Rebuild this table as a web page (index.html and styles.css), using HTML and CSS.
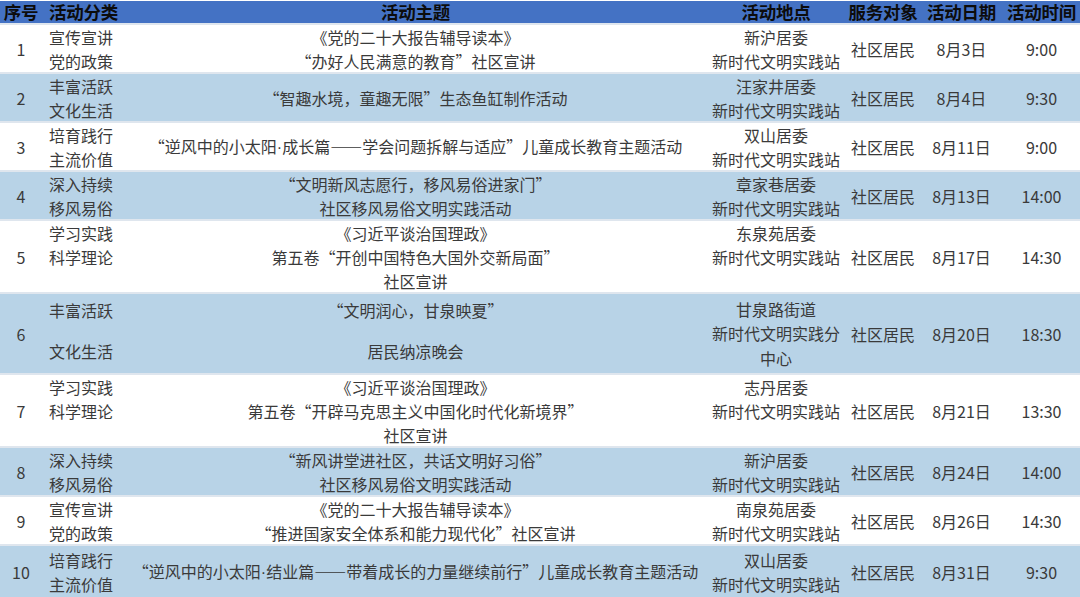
FILE: index.html
```html
<!DOCTYPE html>
<html lang="zh-CN">
<head>
<meta charset="utf-8">
<title>活动安排</title>
<link rel="stylesheet" href="styles.css">
</head>
<body>
<div class="table">
  <div class="row head">
    <div class="cell">序号</div>
    <div class="cell">活动分类</div>
    <div class="cell">活动主题</div>
    <div class="cell">活动地点</div>
    <div class="cell">服务对象</div>
    <div class="cell">活动日期</div>
    <div class="cell">活动时间</div>
  </div>

  <div class="row h2">
    <div class="cell">1</div>
    <div class="cell cat"><span>宣传宣讲</span><span>党的政策</span></div>
    <div class="cell"><span>《党的二十大报告辅导读本》</span><span>“办好人民满意的教育”社区宣讲</span></div>
    <div class="cell"><span>新沪居委</span><span>新时代文明实践站</span></div>
    <div class="cell">社区居民</div>
    <div class="cell">8月3日</div>
    <div class="cell">9:00</div>
  </div>

  <div class="row h2 alt">
    <div class="cell">2</div>
    <div class="cell cat"><span>丰富活跃</span><span>文化生活</span></div>
    <div class="cell"><span>“智趣水境，童趣无限”生态鱼缸制作活动</span></div>
    <div class="cell"><span>汪家井居委</span><span>新时代文明实践站</span></div>
    <div class="cell">社区居民</div>
    <div class="cell">8月4日</div>
    <div class="cell">9:30</div>
  </div>

  <div class="row h2">
    <div class="cell">3</div>
    <div class="cell cat"><span>培育践行</span><span>主流价值</span></div>
    <div class="cell"><span>“逆风中的小太阳<span class="dot">·</span>成长篇——学会问题拆解与适应”儿童成长教育主题活动</span></div>
    <div class="cell"><span>双山居委</span><span>新时代文明实践站</span></div>
    <div class="cell">社区居民</div>
    <div class="cell">8月11日</div>
    <div class="cell">9:00</div>
  </div>

  <div class="row h2 alt">
    <div class="cell">4</div>
    <div class="cell cat"><span>深入持续</span><span>移风易俗</span></div>
    <div class="cell"><span>“文明新风志愿行，移风易俗进家门”</span><span>社区移风易俗文明实践活动</span></div>
    <div class="cell"><span>章家巷居委</span><span>新时代文明实践站</span></div>
    <div class="cell">社区居民</div>
    <div class="cell">8月13日</div>
    <div class="cell">14:00</div>
  </div>

  <div class="row h3">
    <div class="cell">5</div>
    <div class="cell cat top"><span>学习实践</span><span>科学理论</span></div>
    <div class="cell"><span>《习近平谈治国理政》</span><span>第五卷“开创中国特色大国外交新局面”</span><span>社区宣讲</span></div>
    <div class="cell top"><span>东泉苑居委</span><span>新时代文明实践站</span></div>
    <div class="cell">社区居民</div>
    <div class="cell">8月17日</div>
    <div class="cell">14:30</div>
  </div>

  <div class="row h6 alt">
    <div class="cell">6</div>
    <div class="cell cat spread"><span>丰富活跃</span><span>文化生活</span></div>
    <div class="cell spread"><span>“文明润心，甘泉映夏”</span><span>居民纳凉晚会</span></div>
    <div class="cell loose"><span>甘泉路街道</span><span>新时代文明实践分</span><span>中心</span></div>
    <div class="cell">社区居民</div>
    <div class="cell">8月20日</div>
    <div class="cell">18:30</div>
  </div>

  <div class="row h3">
    <div class="cell">7</div>
    <div class="cell cat top"><span>学习实践</span><span>科学理论</span></div>
    <div class="cell"><span>《习近平谈治国理政》</span><span>第五卷“开辟马克思主义中国化时代化新境界”</span><span>社区宣讲</span></div>
    <div class="cell top"><span>志丹居委</span><span>新时代文明实践站</span></div>
    <div class="cell">社区居民</div>
    <div class="cell">8月21日</div>
    <div class="cell">13:30</div>
  </div>

  <div class="row h2 alt">
    <div class="cell">8</div>
    <div class="cell cat"><span>深入持续</span><span>移风易俗</span></div>
    <div class="cell"><span>“新风讲堂进社区，共话文明好习俗”</span><span>社区移风易俗文明实践活动</span></div>
    <div class="cell"><span>新沪居委</span><span>新时代文明实践站</span></div>
    <div class="cell">社区居民</div>
    <div class="cell">8月24日</div>
    <div class="cell">14:00</div>
  </div>

  <div class="row h2">
    <div class="cell">9</div>
    <div class="cell cat"><span>宣传宣讲</span><span>党的政策</span></div>
    <div class="cell"><span>《党的二十大报告辅导读本》</span><span>“推进国家安全体系和能力现代化”社区宣讲</span></div>
    <div class="cell"><span>南泉苑居委</span><span>新时代文明实践站</span></div>
    <div class="cell">社区居民</div>
    <div class="cell">8月26日</div>
    <div class="cell">14:30</div>
  </div>

  <div class="row h2 alt last">
    <div class="cell">10</div>
    <div class="cell cat"><span>培育践行</span><span>主流价值</span></div>
    <div class="cell"><span>“逆风中的小太阳<span class="dot">·</span>结业篇——带着成长的力量继续前行”儿童成长教育主题活动</span></div>
    <div class="cell"><span>双山居委</span><span>新时代文明实践站</span></div>
    <div class="cell">社区居民</div>
    <div class="cell">8月31日</div>
    <div class="cell">9:30</div>
  </div>
</div>
</body>
</html>
```

FILE: styles.css
```css
html, body {
  margin: 0;
  padding: 0;
  background: #ffffff;
}

body {
  width: 1080px;
  height: 597px;
  overflow: hidden;
  font-family: "Noto Sans CJK SC", "Noto Sans", sans-serif;
  font-size: 16px;
  color: #3a3a3a;
}

.table {
  display: flex;
  flex-direction: column;
  width: 1080px;
}

.row {
  display: grid;
  grid-template-columns: 42px 83px 581px 140px 74px 83px 77px;
  border-bottom: 2px solid #dfe6ee;
  background: #ffffff;
}

.row.alt {
  background: #b8d3e7;
}

.row.head {
  background: #4472c4;
  height: 22px;
  border-top: 1px solid #ffffff;
  font-size: 17.5px;
  font-weight: 700;
  color: #0c0c0c;
}

.row.head .cell {
  line-height: 22px;
  letter-spacing: -0.2px;
}

.row.h2 { height: 47px; }
.row.h3 { height: 71px; }
.row.h6 { height: 79px; }
.row.last { border-bottom: none; height: 51px; }

.cell {
  display: flex;
  flex-direction: column;
  align-items: center;
  justify-content: center;
  line-height: 24px;
  white-space: nowrap;
  text-align: center;
}

.cell.cat {
  align-items: flex-start;
  padding-left: 7px;
}

.cell.top {
  justify-content: flex-start;
}

.cell.spread {
  justify-content: flex-start;
  padding-top: 4px;
  gap: 17px;
}

.cell.loose {
  line-height: 24.5px;
}

.dot {
  font-family: "Liberation Sans", sans-serif;
}
```
